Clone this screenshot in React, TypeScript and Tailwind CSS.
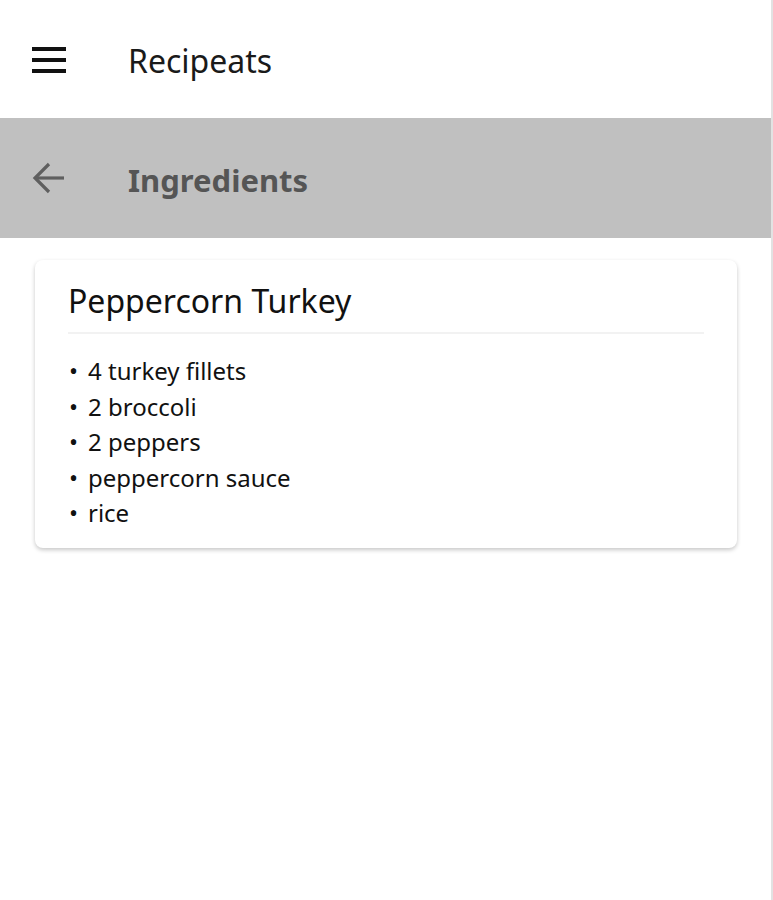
import React from 'react';

const ingredients = ['4 turkey fillets', '2 broccoli', '2 peppers', 'peppercorn sauce', 'rice'];

const MenuIcon = () => (
  <svg width="34" height="26" viewBox="0 0 34 26" fill="#111">
    <rect x="0" y="0" width="34" height="4" />
    <rect x="0" y="11" width="34" height="4" />
    <rect x="0" y="22" width="34" height="4" />
  </svg>
);

const BackIcon = () => (
  <svg width="34" height="32" viewBox="0 0 34 32" fill="none" stroke="#5f5f5f" strokeWidth="3.2">
    <line x1="3" y1="16" x2="32" y2="16" />
    <polyline points="17,2 3,16 17,30" />
  </svg>
);

const App = () => {
  return (
    <div className="min-h-[900px] w-[773px] bg-white" style={{ fontFamily: '"Noto Sans", "Open Sans", sans-serif' }}>
      <div className="min-h-[900px] w-[773px] border-r-2 border-[#e2e2e2]">
        <header className="flex h-[118px] items-center">
          <div className="ml-[32px] flex w-[96px] items-center pt-[1px]">
            <MenuIcon />
          </div>
          <h1 className="pt-[4px] text-[32px] leading-none text-[#1a1a1a]">Recipeats</h1>
        </header>

        <div className="flex h-[120px] items-center bg-[#c0c0c0]">
          <div className="ml-[32px] flex w-[96px] items-center">
            <BackIcon />
          </div>
          <h2 className="pt-[4px] text-[31px] font-bold leading-none text-[#555555]">Ingredients</h2>
        </div>

        <main className="px-[35px] pt-[22px]">
          <div className="w-[702px] rounded-lg bg-white px-[33px] pt-[21px] pb-[17px] shadow-[0_2px_4px_rgba(0,0,0,0.22)]">
            <h3 className="text-[32px] leading-[40px] text-[#111]">Peppercorn Turkey</h3>
            <div className="mt-[11px] h-[2px] bg-[#f2f2f2]" />
            <ul className="mt-[19px] text-[24px] leading-[35.5px] text-[#111]">
              {ingredients.map((item) => (
                <li key={item} className="flex">
                  <span className="w-[20px] pl-[1px]">•</span>
                  <span>{item}</span>
                </li>
              ))}
            </ul>
          </div>
        </main>
      </div>
    </div>
  );
};

export default App;
